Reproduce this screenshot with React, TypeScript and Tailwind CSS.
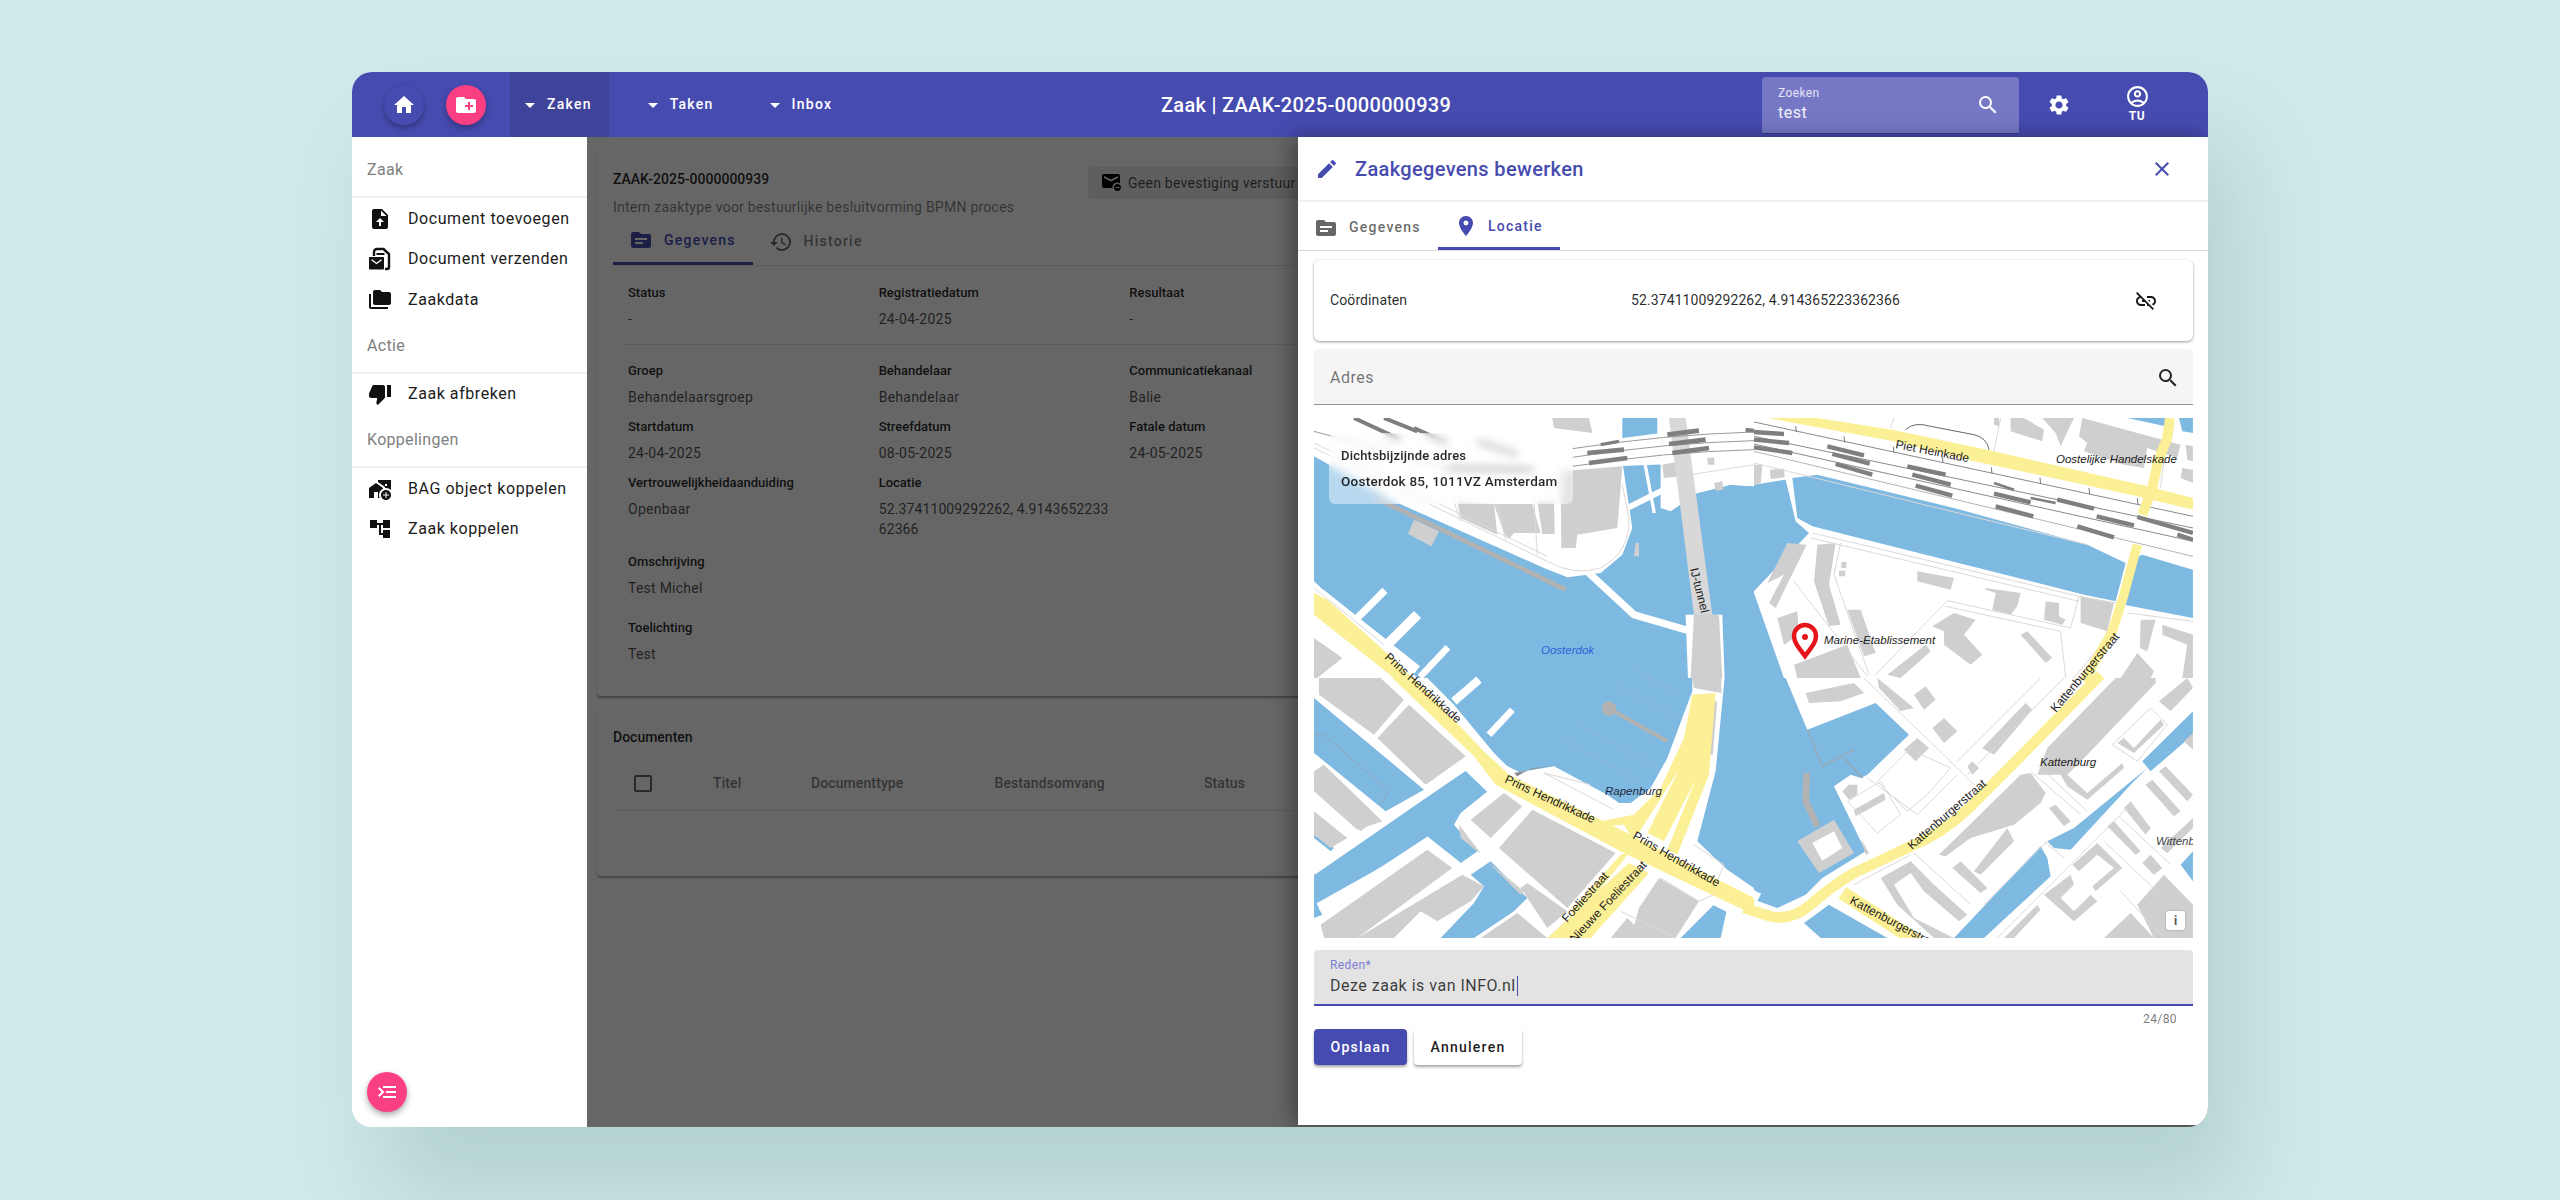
import {
  MdAccountTree,
  MdAddHomeWork,
  MdArrowDropDown,
  MdClose,
  MdCreateNewFolder,
  MdEdit,
  MdFolderCopy,
  MdHistory,
  MdHome,
  MdLinkOff,
  MdLocationOn,
  MdMenuOpen,
  MdOutlineAccountCircle,
  MdSearch,
  MdSettings,
  MdThumbDown,
  MdTopic,
  MdUnsubscribe,
} from "react-icons/md"

// map is traced per quadrant, points are in 3x crop coordinates
const A = "translate(0 0) scale(0.3333)"
const B = "translate(440 0) scale(0.3333)"
const C = "translate(0 260) scale(0.3333)"
const D = "translate(440 260) scale(0.3333)"

const water: [string, string[]][] = [
  [A, ["0,115 240,250 690,450 760,478 860,465 925,410 955,330 925,130 925,0 1030,0 1030,45 1095,100 1150,225 1250,200 1320,205 1320,780 310,780 0,490"]],
  [B, [
    "0,200 95,185 125,310 165,345 0,520",
    "0,525 90,780 0,780",
    "115,180 190,170 600,270 1000,380 1115,435 1085,550 990,530 175,325 130,300",
    "1165,410 1317,455 1317,600 1110,560 1140,420",
    "1120,0 1235,0 1235,25",
    "1275,0 1317,0 1317,45 1285,40",
  ]],
  [C, [
    "340,0 420,80 540,225 600,285 720,265 880,350 915,375 950,375 1010,330 1060,240 1135,40 1135,0",
    "1232,0 1205,280 1150,490 1240,575 1320,630 1320,0",
    "0,60 330,335 215,400 0,225",
    "0,590 225,430 330,350 475,265 545,320 440,405 420,440 500,530 445,565 340,490 0,680",
    "470,590 530,550 640,660 600,700 480,780 380,780 480,675 510,625",
    "0,470 60,510 50,520 0,480",
    "0,660 25,710 0,720",
    "1100,780 1210,670 1240,690 1220,780",
  ]],
  [D, [
    "0,0 95,0 160,155 365,75 465,170 340,290 320,300 290,290 240,325 335,520 205,600 155,650 70,690 0,665",
    "150,735 225,680 400,780 200,780",
    "600,780 860,505 880,540 890,595 690,780",
    "880,490 960,450 1180,270 1140,310 950,515 900,510",
    "1165,250 1317,100 1317,170 1190,280",
    "1280,560 1317,520 1317,610",
  ]],
]

const buildings: [string, string[]][] = [
  [A, [
    "740,160 925,145 910,330 790,350 785,390 742,390",
    "540,258 655,258 680,345 600,345 585,362 570,345",
    "670,250 720,250 722,348 685,348",
    "430,250 540,258 550,350 440,300",
    "300,305 375,340 352,385 282,348",
    "715,0 825,0 835,45 720,30",
    "1045,140 1100,130 1105,175 1050,180",
    "1200,195 1225,190 1228,215 1205,218",
    "0,660 85,720 10,780 0,780",
    "1180,120 1200,118 1202,140 1182,140",
    "965,375 975,375 975,415 960,415",
  ]],
  [B, [
    "770,0 810,0 870,35 865,70 770,40",
    "865,0 960,0 920,85 905,45",
    "985,0 1280,80 1270,120 1180,90 1170,150 1110,140 990,100 1000,75 975,55",
    "1295,80 1317,85 1317,130 1300,125",
    "1285,150 1317,155 1317,195 1280,180",
    "0,140 25,140 20,195 0,200",
    "48,155 90,152 92,178 50,183",
    "190,380 245,375 225,500 260,620 225,625 180,490",
    "100,375 158,380 65,570 45,555 90,470 40,495",
    "490,460 600,480 590,515 490,490",
    "695,510 800,525 790,565 770,590 715,575 725,525 695,515",
    "875,550 915,555 915,595 935,605 925,620 870,605",
    "980,535 1080,555 1060,640 980,615",
    "70,600 130,580 135,650 90,680",
    "280,575 320,575 365,705 330,715",
    "120,740 280,680 320,780 130,780",
    "535,625 600,585 665,605 630,650 685,710 650,740 570,680 570,640",
    "800,650 820,640 895,720 875,735",
    "400,770 515,680 530,700 440,780",
    "1160,605 1205,605 1180,700 1158,690",
    "1225,620 1317,650 1317,780 1285,780 1300,680 1225,650",
    "1100,780 1150,705 1200,760 1190,780",
    "262,432 278,432 276,450 262,450",
    "255,458 275,458 273,475 255,475",
    "720,0 735,0 735,25 720,20",
  ]],
  [C, [
    "15,0 200,0 270,65 180,170 15,50",
    "190,180 285,80 455,235 335,320",
    "0,280 30,260 205,430 130,455 0,340",
    "0,400 100,480 50,510 0,470",
    "470,425 570,345 625,385 530,480",
    "555,510 655,395 905,525 760,690",
    "435,440 500,525 490,520 440,480",
    "20,740 340,515 415,570 130,780 30,780",
    "130,780 445,590 510,625 470,670 370,730 320,700 240,780",
    "520,550 630,640 620,650 530,560",
    "640,615 760,700 700,750 620,630",
    "500,780 610,705 700,780",
    "975,690 1035,600 1155,670 1085,780 950,780",
    "890,780 940,720 1000,780",
    "110,430 135,410 165,440 140,460",
  ]],
  [D, [
    "155,45 300,15 330,45 260,70 165,75",
    "370,0 480,90 440,100 375,30",
    "480,50 515,25 545,65 510,95",
    "535,150 570,120 610,160 570,195",
    "450,215 490,180 525,210 485,250",
    "685,210 815,75 835,95 720,230",
    "640,265 655,250 675,270 655,290",
    "555,530 800,290 830,285 875,345 860,375 780,440 650,480 575,535",
    "595,570 620,550 700,630 680,645",
    "660,580 760,450 780,490 680,590",
    "880,210 1085,0 1205,0 1205,15 1000,230 940,290 1000,345 1105,255 1110,270 1000,365 940,325 920,290 850,290",
    "885,390 905,380 950,430 930,445",
    "1110,390 1130,370 1190,450 1175,470",
    "1060,445 1080,430 1160,520 1145,530",
    "1175,320 1195,305 1280,400 1260,415",
    "1215,280 1235,265 1317,350 1300,370",
    "870,650 950,590 960,620 920,660 960,700 1010,650 1030,670 960,730",
    "955,560 1030,495 1105,570 1025,640 1015,625 1080,570 1030,530 975,580",
    "1165,555 1190,530 1225,570 1200,590",
    "1150,680 1230,590 1317,680 1317,780 1200,780",
    "1050,780 1130,705 1200,780",
    "750,780 850,680 860,695 780,780",
    "1220,510 1317,420 1317,450 1240,525",
    "1090,195 1110,180 1140,210 1220,125 1230,140 1140,225",
    "1215,70 1300,0 1317,30 1250,100",
    "1290,190 1317,165 1317,215",
    "380,600 470,550 540,620 640,710 615,730 510,640 470,585 420,620 480,720 600,780 540,780 430,680",
    "285,320 310,320 310,350 285,365 265,340",
    "300,395 390,345 395,365 305,415",
    "130,490 240,425 300,525 195,585",
    "320,480 345,525 335,530",
  ]],
]

const thin: [string, string[]][] = [
  [A, [
    "M0,90 L700,430 Q780,475 860,450 Q950,400 945,300 L925,200",
    "M0,75 L700,415",
    "M420,250 L440,310",
    "M660,250 L670,410",
    "M550,258 L575,365",
    "M1130,170 L1320,140",
    "M0,510 L210,680",
  ]],
  [B, [
    "M175,345 L975,535 L1115,560",
    "M170,360 L975,550",
    "M260,375 L240,470 L345,770",
    "M120,490 L340,775",
    "M580,548 L950,630 L975,535",
    "M575,565 L920,640 L935,780",
    "M580,548 L365,770",
    "M0,135 L1000,380",
    "M740,0 L720,100",
    "M420,0 L410,30",
    "M1230,120 L1220,210",
    "M1100,570 L1080,640",
    "M960,780 L1050,670",
    "M1120,585 L1317,610",
  ]],
  [C, [
    "M830,320 L690,285 L900,395",
    "M1140,500 L1230,560 L1210,610",
    "M1040,600 L1155,670 L1200,650",
    "M920,700 L1085,780",
  ]],
  [D, [
    "M330,0 L610,270 L660,320",
    "M610,250 L860,0",
    "M640,290 L930,0",
    "M340,300 L490,410 L610,290",
    "M480,220 L590,270 L520,350 L460,400 L370,310 L480,200",
    "M480,525 L650,680",
    "M690,680 L880,490",
    "M870,490 L930,540",
    "M830,280 L980,410",
    "M850,260 L1000,400",
    "M1075,200 L1190,90 L1240,140 L1150,250 L1075,200",
    "M1095,415 L1250,560",
    "M1050,490 L1230,660",
    "M1100,640 L1230,780",
    "M730,780 L1120,390",
    "M300,620 L470,530",
    "M280,370 L380,310 L440,410 L370,465 L280,370",
  ]],
]

// dark sleepers on the railway bundle
const rails: [string, number, number, number, number, number][] = [
  [A, 860, 80, 915, 70, 10],
  [A, 1060, 50, 1155, 38, 14],
  [A, 820, 105, 930, 95, 14],
  [A, 1065, 78, 1175, 65, 14],
  [A, 825, 135, 940, 120, 14],
  [A, 1075, 105, 1185, 90, 14],
  [A, 1295, 35, 1320, 38, 12],
  [A, 120, 0, 260, 65, 12],
  [A, 210, 0, 310, 40, 12],
  [A, 300, 30, 400, 75, 12],
  [A, 490, 70, 610, 110, 12],
  [A, 400, 150, 660, 155, 14],
  [B, 0, 42, 90, 48, 13],
  [B, 0, 65, 105, 75, 13],
  [B, 0, 88, 115, 105, 13],
  [B, 220, 85, 330, 112, 13],
  [B, 235, 108, 347, 137, 13],
  [B, 245, 138, 355, 170, 13],
  [B, 460, 145, 575, 170, 13],
  [B, 475, 170, 590, 200, 13],
  [B, 485, 203, 595, 233, 13],
  [B, 720, 195, 780, 215, 8],
  [B, 720, 227, 830, 253, 13],
  [B, 725, 265, 838, 295, 13],
  [B, 830, 240, 905, 255, 8],
  [B, 910, 245, 1020, 272, 13],
  [B, 1028, 295, 1140, 322, 13],
  [B, 970, 325, 1080, 358, 13],
  [B, 1150, 297, 1317, 345, 13],
  [B, 1270, 350, 1317, 365, 13],
]

const labels: { t: string; x: number; y: number; r?: number; s?: number; i?: boolean; c?: string }[] = [
  { t: "Piet Heinkade", x: 581, y: 30, r: 11 },
  { t: "Oostelijke Handelskade", x: 742, y: 45, r: 0, i: true, s: 11.5 },
  { t: "Marine-Etablissement", x: 510, y: 226, i: true, s: 11.5 },
  { t: "Oosterdok", x: 227, y: 236, i: true, c: "#2f62d6", s: 11.5 },
  { t: "IJ-tunnel", x: 376, y: 151, r: 76 },
  { t: "Prins Hendrikkade", x: 70, y: 240, r: 42 },
  { t: "Prins Hendrikkade", x: 190, y: 364, r: 25 },
  { t: "Prins Hendrikkade", x: 318, y: 420, r: 30 },
  { t: "Rapenburg", x: 291, y: 377, i: true, s: 11.5, c: "#1f2a3a" },
  { t: "Foeliestraat", x: 253, y: 505, r: -48 },
  { t: "Nieuwe Foeliestraat", x: 261, y: 525, r: -47 },
  { t: "Kattenburgerstraat", x: 598, y: 432, r: -41 },
  { t: "Kattenburgerstraat", x: 742, y: 295, r: -50 },
  { t: "Kattenburgerstraat", x: 535, y: 485, r: 28 },
  { t: "Kattenburg", x: 726, y: 348, i: true, s: 11.5 },
  { t: "Wittenburg", x: 842, y: 427, i: true, s: 11.5, c: "#444" },
]

function MapDrawing() {
  return (
    <svg viewBox="0 0 879 520" className="block h-[520px] w-[879px] bg-white">
      {water.map(([q, list], i) => (
        <g key={i} transform={q} fill="#7eb9e2">
          {list.map((p, j) => (
            <polygon key={j} points={p} />
          ))}
        </g>
      ))}

      {/* piers, bridges, quay strips */}
      <g transform={A} fill="none" stroke="#fff" strokeLinecap="square">
        <polyline points="830,470 960,590 1130,640" strokeWidth={22} />
        <polyline points="950,265 1090,195" strokeWidth={18} />
        <polyline points="990,120 1020,280" strokeWidth={10} />
        <polyline points="135,595 205,525" strokeWidth={22} />
        <polyline points="220,680 300,600" strokeWidth={30} />
        <polyline points="325,770 395,695" strokeWidth={20} />
        <polyline points="0,550 290,780" strokeWidth={90} strokeLinecap="butt" />
      </g>
      <g transform={A}>
        <polygon points="0,0 700,0 925,130 925,330 860,450 700,430 0,85" fill="#fff" />
        <polygon points="775,80 1040,45 1320,30 1320,100 1150,135 775,150" fill="#fff" />
        <polygon points="1040,130 1150,100 1320,130 1320,205 1250,200 1150,225 1070,280 1040,270" fill="#fff" />
        <polygon points="1115,590 1225,590 1232,780 1122,780" fill="#fff" />
      </g>
      <g transform={C} fill="none" stroke="#fff">
        <polyline points="420,70 495,5" strokeWidth={25} />
        <polyline points="525,170 595,95" strokeWidth={20} />
        <polyline points="235,0 545,300 1320,690" strokeWidth={95} />
        <polyline points="0,580 340,345 480,250" strokeWidth={20} />
        <polyline points="20,700 340,490 440,570 540,500 640,385" strokeWidth={24} />
      </g>

      {/* docks and lines on the water */}
      <g transform={A} stroke="#b2b2b2" fill="none">
        <line x1={185} y1={240} x2={755} y2={515} strokeWidth={14} />
        <line x1={950} y1={745} x2={1010} y2={780} strokeWidth={3} stroke="#93b8d4" />
      </g>
      <g transform={C} fill="none">
        <line x1={900} y1={100} x2={1060} y2={190} stroke="#b2b2b2" strokeWidth={12} />
        <circle cx={885} cy={92} r={22} fill="#b2b2b2" />
        <line x1={1000} y1={0} x2={1100} y2={45} stroke="#93b8d4" strokeWidth={3} />
        <line x1={910} y1={25} x2={1085} y2={115} stroke="#93b8d4" strokeWidth={3} />
        <line x1={785} y1={135} x2={1025} y2={265} stroke="#93b8d4" strokeWidth={3} />
        <line x1={755} y1={190} x2={985} y2={315} stroke="#93b8d4" strokeWidth={3} />
        <polygon points="600,285 720,262 650,272 610,295" fill="#8e8e8e" />
        <line x1={1205} y1={70} x2={1192} y2={230} stroke="#cfcfcf" strokeWidth={9} />
        <polyline points="5,170 30,170 225,340 200,375" stroke="#93a5b4" strokeWidth={3} />
      </g>
      <g transform={D} fill="none">
        <polyline points="160,155 205,265 300,215" stroke="#9aa6b0" strokeWidth={4} />
        <polyline points="270,240 325,300" stroke="#9aa6b0" strokeWidth={4} />
        <polyline points="158,285 155,370 190,445" stroke="#b2b2b2" strokeWidth={20} />
      </g>

      {buildings.map(([q, list], i) => (
        <g key={i} transform={q} fill="#cfcfcf">
          {list.map((p, j) => (
            <polygon key={j} points={p} />
          ))}
        </g>
      ))}
      <g transform={D}>
        <polygon points="175,495 240,460 265,510 205,548" fill="#fff" />
      </g>

      {/* IJ-tunnel */}
      <g transform={A} fill="#d8d8d8">
        <polygon points="1065,0 1115,0 1195,590 1140,590" />
        <polygon points="1140,590 1215,590 1225,780 1130,780" fill="#cfcfcf" />
      </g>
      <g transform={C}>
        <polygon points="1135,0 1222,0 1222,45 1140,30" fill="#cfcfcf" />
      </g>

      {thin.map(([q, list], i) => (
        <g key={i} transform={q} fill="none" stroke="#dcd8d8" strokeWidth={3}>
          {list.map((d, j) => (
            <path key={j} d={d} />
          ))}
        </g>
      ))}

      {/* railway */}
      <g transform={A} fill="none" stroke="#9a9a9a" strokeWidth={3}>
        <path d="M775,92 Q1050,50 1320,42" />
        <path d="M775,118 Q1050,75 1320,68" />
        <path d="M775,145 Q1050,102 1320,95" />
        <path d="M0,40 L400,150" />
      </g>
      <g transform={B} fill="none" stroke="#8a8a8a" strokeWidth={3}>
        <polygon points="0,35 1317,305 1317,425 0,120" fill="#fff" stroke="none" />
        <path d="M0,12 L1317,295" />
        <path d="M0,55 L1317,330" />
        <path d="M0,78 L1317,370" />
        <path d="M0,100 L1317,415" stroke="#b5b5b5" />
        <path d="M455,35 Q480,10 530,25 L660,50 Q700,60 705,95" stroke="#666" />
        {[125, 270, 418, 565, 712, 858, 1005, 1150].map((x, i) => (
          <line key={x} x1={x} y1={24 + i * 31} x2={x + 2} y2={42 + i * 31} stroke="#777" />
        ))}
      </g>
      {rails.map(([q, x1, y1, x2, y2, w], i) => (
        <g key={i} transform={q}>
          <line x1={x1} y1={y1} x2={x2} y2={y2} stroke="#7f7f7f" strokeWidth={w} />
        </g>
      ))}

      {/* main roads */}
      <g transform={A} fill="#fbf095">
        <polygon points="0,525 40,545 235,720 295,780 240,780 0,590" />
      </g>
      <g transform={C} fill="#fbf095">
        <polygon points="235,0 300,0 510,220 585,290 950,470 1320,660 1320,710 930,525 545,320 480,235" />
        <polygon points="1135,50 1205,45 1185,290 1090,530 1060,515 1145,305 1050,490 1000,465 1095,275 990,440 975,465 950,475 930,440 870,445 860,430 960,410 1040,330 1110,180" />
        <polygon points="945,555 1005,585 830,780 700,780" />
        <polygon points="920,530 945,525 790,720 770,700" />
      </g>
      <g transform={B} fill="#fbf095">
        <polygon points="40,0 190,0 415,35 720,100 1180,205 1317,240 1317,275 1150,235 640,125 420,70" />
      </g>
      <g transform={B} fill="none" stroke="#fbf095" strokeLinejoin="round">
        <polyline points="1248,0 1240,60 1212,130 1195,210 1165,290" strokeWidth={30} />
        <polyline points="1150,380 1110,530 1075,640 990,790" strokeWidth={28} />
      </g>
      <g transform={D} fill="none" stroke="#fbf095" strokeLinejoin="round">
        <path d="M-30,690 L50,715 Q110,730 170,680 Q240,620 300,585 L470,505 Q560,470 640,395 L800,235 L1040,-10" strokeWidth={32} />
        <path d="M265,645 L490,790" strokeWidth={42} />
      </g>

      {labels.map((l, i) => (
        <text
          key={i}
          x={l.x}
          y={l.y}
          transform={l.r ? `rotate(${l.r} ${l.x} ${l.y})` : undefined}
          fontSize={l.s ?? 12}
          fontStyle={l.i ? "italic" : "normal"}
          fill={l.c ?? "#222"}
          fontFamily="'Liberation Sans', sans-serif"
        >
          {l.t}
        </text>
      ))}

      {/* pin */}
      <path
        d="M491,238 C484,229 480,224 480,218 A11,11 0 1 1 502,218 C502,224 498,229 491,238 Z"
        fill="#fff"
        stroke="#e8141c"
        strokeWidth={4.5}
      />
      <circle cx={491} cy={219} r={3} fill="#e8141c" />
    </svg>
  )
}

// solid file with an upward arrow
function UploadDocIcon() {
  return (
    <svg viewBox="0 0 24 24" className="h-[24px] w-[24px]">
      <path fillRule="evenodd" fill="currentColor" d="M14 2H6c-1.1 0-2 .9-2 2v16c0 1.1.9 2 2 2h12c1.1 0 2-.9 2-2V8l-6-6zm-1 7V3.5L18.5 9H13z" />
      <polygon fill="#fff" points="8,15 12,11 16,15 13,15 13,19 11,19 11,15" />
    </svg>
  )
}

// outlined file behind an envelope
function SendDocIcon() {
  return (
    <svg viewBox="0 0 24 24" className="h-[24px] w-[24px]">
      <path d="M6 9V5a3 3 0 0 1 3-3h6.500l5.500 5v13a2 2 0 0 1-2 2h-2" fill="none" stroke="currentColor" strokeWidth={2.4} />
      <path d="M8.500 7h8" fill="none" stroke="currentColor" strokeWidth={2} />
      <rect x={1} y={10} width={15} height={12.500} rx={0.8} fill="currentColor" />
      <polyline points="3.500,12.800 8.500,16.500 13.500,12.800" fill="none" stroke="#fff" strokeWidth={1.4} />
    </svg>
  )
}

function SideLabel({ children, first }: { children: string; first?: boolean }) {
  return (
    <div className={`flex items-center border-b-2 border-[#f0f0f0] pl-[15px] text-[16px] tracking-[0.3px] text-[#808080] ${first ? "h-[61px] pt-[7px]" : "h-[54px]"}`}>
      {children}
    </div>
  )
}

function SideItem({ icon, label }: { icon: React.ReactNode; label: string }) {
  return (
    <div className="flex h-[40.5px] items-center pl-[15px] pt-[1px] text-[16px] tracking-[0.56px] text-[#1b1b1b]">
      <span className="flex w-[25px] justify-center text-[24px] text-[#111]">{icon}</span>
      <span className="ml-[16px] whitespace-nowrap">{label}</span>
    </div>
  )
}

function NavButton({ label, active }: { label: string; active?: boolean }) {
  return (
    <div className={`flex h-full items-center pl-[8.5px] pr-[17.5px] text-[14px] font-medium tracking-[1.25px] text-white ${active ? "bg-[#3f4399]" : ""}`}>
      <MdArrowDropDown className="mr-[5px] text-[24px]" />
      {label}
    </div>
  )
}

function Field({ label, value, wide }: { label: string; value: string; wide?: boolean }) {
  return (
    <div className="pb-[11px]">
      <div className="h-[18px] text-[13px] font-medium leading-[18px] text-black/85">{label}</div>
      <div className={`mt-[7px] text-[14px] leading-[20px] text-black/70 ${wide ? "w-[232px] break-all tracking-[0.12px]" : "tracking-[0.25px]"}`}>{value}</div>
    </div>
  )
}

function Field2({ label, value }: { label: string; value: string }) {
  return (
    <div className="pb-[21px] pl-[15px]">
      <div className="h-[18px] text-[13px] font-medium leading-[18px] text-black/85">{label}</div>
      <div className="mt-[7px] text-[14px] leading-[20px] tracking-[0.25px] text-black/70">{value}</div>
    </div>
  )
}

export default function App() {
  return (
    <div className="h-[1200px] overflow-hidden bg-[#cfe9e8] pl-[352px] pt-[72px] font-[Roboto,sans-serif]">
      <div className="relative flex h-[1055px] w-[1856px] flex-col overflow-hidden rounded-[20px] bg-white shadow-[30px_70px_90px_rgba(40,90,90,0.16)]">
        {/* top bar */}
        <header className="flex h-[65px] shrink-0 items-center bg-[#464bb0] text-white">
          <div className="flex h-full w-[809px] items-center pl-[31.5px]">
            <button className="flex h-[40px] w-[40px] items-center justify-center rounded-full bg-[#464bb0] text-[24px] shadow-[0_3px_6px_rgba(0,0,0,0.3)]">
              <MdHome />
            </button>
            <button className="ml-[22.5px] flex h-[40px] w-[40px] items-center justify-center rounded-full bg-[#fb3f83] text-[24px] shadow-[0_3px_6px_rgba(0,0,0,0.3)]">
              <MdCreateNewFolder />
            </button>
            <div className="ml-[23.5px] flex h-full gap-[23px]">
              <NavButton label="Zaken" active />
              <NavButton label="Taken" />
              <NavButton label="Inbox" />
            </div>
          </div>
          <div className="whitespace-nowrap text-[20px] font-medium tracking-[0.3px]">Zaak | ZAAK-2025-0000000939</div>
          <div className="ml-auto flex h-[56px] w-[257px] items-center justify-between rounded-t-[4px] bg-[#7678c6] pl-[16px] pr-[19px] shadow-[0_1px_1px_rgba(0,0,0,0.2)]">
            <div className="-mt-[1px]">
              <div className="text-[12px] leading-[16px] tracking-[0.4px] text-white/80">Zoeken</div>
              <div className="mt-[2px] text-[16px] leading-[20px] tracking-[0.5px] text-white/90">test</div>
            </div>
            <MdSearch className="text-[24px]" />
          </div>
          <MdSettings className="ml-[28px] text-[24px]" />
          <div className="-mt-[3px] ml-[46px] mr-[51px] flex w-[40px] flex-col items-center">
            <MdOutlineAccountCircle className="text-[25px]" />
            <div className="text-[12px] font-bold leading-[14px] tracking-[0.5px]">TU</div>
          </div>
        </header>

        <div className="relative flex min-h-0 flex-1">
          {/* left menu */}
          <aside className="w-[235px] shrink-0 bg-white">
            <SideLabel first>Zaak</SideLabel>
            <SideItem icon={<UploadDocIcon />} label="Document toevoegen" />
            <SideItem icon={<SendDocIcon />} label="Document verzenden" />
            <SideItem icon={<MdFolderCopy />} label="Zaakdata" />
            <SideLabel>Actie</SideLabel>
            <SideItem icon={<MdThumbDown />} label="Zaak afbreken" />
            <SideLabel>Koppelingen</SideLabel>
            <SideItem icon={<MdAddHomeWork />} label="BAG object koppelen" />
            <SideItem icon={<MdAccountTree />} label="Zaak koppelen" />
          </aside>

          {/* case page, dimmed by the drawer backdrop */}
          <main className="relative min-w-0 flex-1 overflow-hidden bg-white">
            <div className="ml-[10px] mt-[10px] w-[1400px] rounded-[4px] bg-white pb-[11px] pl-[16px] shadow-[0_2px_2px_rgba(0,0,0,0.35)]">
              <div className="flex pt-[22px]">
                <div className="w-[475px]">
                  <div className="text-[14px] font-medium leading-[20px] text-black/85">ZAAK-2025-0000000939</div>
                  <div className="mt-[8px] whitespace-nowrap text-[14px] leading-[20px] tracking-[0.25px] text-black/50">
                    Intern zaaktype voor bestuurlijke besluitvorming BPMN proces
                  </div>
                </div>
                <div className="-mt-[2px] flex h-[32px] w-[280px] items-center rounded-[4px] bg-[#ececec] pl-[11px] text-[14px] tracking-[0.25px] text-black/70">
                  <MdUnsubscribe className="mr-[5px] text-[24px] text-black" />
                  Geen bevestiging verstuur
                </div>
              </div>
              <div className="mt-[1px] flex h-[48px] items-stretch border-b border-black/10 text-[14px] font-medium tracking-[1.25px]">
                <div className="flex w-[139.5px] items-center border-b-[3px] border-[#464bb0] pl-[16px] text-[#464bb0]">
                  <MdTopic className="text-[24px]" />
                  <span className="ml-[11px]">Gegevens</span>
                </div>
                <div className="flex items-center pl-[16px] text-black/50">
                  <MdHistory className="text-[24px] text-black/60" />
                  <span className="ml-[11px]">Historie</span>
                </div>
              </div>
              <div className="grid w-[767px] grid-cols-3 pl-[15px] pt-[18px]">
                <div>
                  <div className="h-[18px] text-[13px] font-medium leading-[18px] text-black/85">Status</div>
                  <div className="mt-[7px] text-[14px] leading-[20px] text-black/70">-</div>
                </div>
                <div>
                  <div className="h-[18px] text-[13px] font-medium leading-[18px] text-black/85">Registratiedatum</div>
                  <div className="mt-[7px] text-[14px] leading-[20px] tracking-[0.25px] text-black/70">24-04-2025</div>
                </div>
                <div>
                  <div className="h-[18px] text-[13px] font-medium leading-[18px] text-black/85">Resultaat</div>
                  <div className="mt-[7px] text-[14px] leading-[20px] text-black/70">-</div>
                </div>
              </div>
              <div className="ml-[10px] mt-[15px] h-px bg-black/10" />
              <div className="grid w-[767px] grid-cols-3 pb-[3px] pl-[15px] pt-[17px]">
                <Field label="Groep" value="Behandelaarsgroep" />
                <Field label="Behandelaar" value="Behandelaar" />
                <Field label="Communicatiekanaal" value="Balie" />
                <Field label="Startdatum" value="24-04-2025" />
                <Field label="Streefdatum" value="08-05-2025" />
                <Field label="Fatale datum" value="24-05-2025" />
                <Field label="Vertrouwelijkheidaanduiding" value="Openbaar" />
                <Field label="Locatie" value="52.37411009292262, 4.914365223362366" wide />
                <div />
              </div>
              <Field2 label="Omschrijving" value="Test Michel" />
              <Field2 label="Toelichting" value="Test" />
            </div>

            <div className="ml-[10px] mt-[10px] h-[170px] w-[1400px] rounded-[4px] bg-white pl-[16px] shadow-[0_2px_2px_rgba(0,0,0,0.35)]">
              <div className="pt-[21px] text-[14px] font-medium leading-[20px] text-black/85">Documenten</div>
              <div className="mt-[10px] flex h-[54px] w-[1200px] items-center border-b border-black/10 text-[14px] font-medium tracking-[0.1px] text-black/50">
                <div className="ml-[21px] h-[17px] w-[18px] rounded-[2px] border-2 border-black/60" />
                <div className="ml-[61px] w-[98px]">Titel</div>
                <div className="w-[183.5px]">Documenttype</div>
                <div className="w-[209.5px]">Bestandsomvang</div>
                <div>Status</div>
              </div>
            </div>

            <div className="absolute inset-0 bg-black/60" />
          </main>

          {/* edit drawer */}
          <section className="absolute bottom-[2px] right-0 top-0 flex w-[910px] flex-col bg-white shadow-[-6px_0_20px_rgba(0,0,0,0.35)]">
            <div className="flex h-[65px] shrink-0 items-center border-b-2 border-[#f0f0f0] pl-[16.5px] pr-[34px] text-[#464bb0]">
              <MdEdit className="shrink-0 text-[24px]" />
              <span className="ml-[16.5px] whitespace-nowrap text-[20px] font-medium tracking-[0.35px]">Zaakgegevens bewerken</span>
              <MdClose className="ml-auto text-[24px]" />
            </div>
            <div className="flex h-[49px] shrink-0 items-stretch border-b border-black/15 text-[14px] font-medium tracking-[1.25px]">
              <div className="flex w-[140px] items-center pl-[16px] pt-[3px] text-black/60">
                <MdTopic className="text-[24px]" />
                <span className="ml-[11px]">Gegevens</span>
              </div>
              <div className="flex w-[122px] items-center border-b-[3px] border-[#464bb0] pl-[16px] pt-[3px] text-[#464bb0]">
                <MdLocationOn className="text-[24px]" />
                <span className="ml-[10px]">Locatie</span>
              </div>
            </div>
            <div className="pl-[16px] pr-[15px] pt-[9px]">
              <div className="flex h-[81px] items-center rounded-[6px] bg-white pl-[16px] text-[14px] tracking-[0.1px] text-black/85 shadow-[0_1px_3px_rgba(0,0,0,0.4)]">
                <div className="w-[301px]">Coördinaten</div>
                <div>52.37411009292262, 4.914365223362366</div>
                <MdLinkOff className="ml-auto mr-[35px] text-[24px] text-black/90" />
              </div>
              <div className="mt-[8px] flex h-[56px] items-center rounded-t-[4px] border-b border-black/40 bg-[#f5f5f5] pl-[16px] pr-[13px] pt-[2px] text-[16px] tracking-[0.5px] text-black/55">
                Adres
                <MdSearch className="ml-auto text-[24px] text-black/85" />
              </div>
              <div className="relative mt-[13px] h-[520px]">
                <MapDrawing />
                <div className="absolute left-[15px] top-[15px] h-[71px] w-[244px] rounded-[6px] bg-white/45 pl-[12px] pt-[13px] backdrop-blur-[4px]">
                  <div className="text-[13px] font-medium leading-[20px] tracking-[0.2px] text-black/85">Dichtsbijzijnde adres</div>
                  <div className="mt-[5px] whitespace-nowrap text-[13.5px] font-medium leading-[20px] tracking-[0.25px] text-black/85">Oosterdok 85, 1011VZ Amsterdam</div>
                </div>
                <div className="absolute bottom-[8px] right-[8px] flex h-[19px] w-[19px] items-center justify-center rounded-[3px] bg-white text-[12px] font-bold text-[#555] shadow-[0_0_2px_rgba(0,0,0,0.3)]">
                  i
                </div>
              </div>
              <div className="mt-[12px] h-[56px] rounded-t-[4px] border-b-2 border-[#464bb0] bg-[#e3e3e3] pl-[16px] pt-[7px]">
                <div className="text-[12px] leading-[16px] tracking-[0.4px] text-[#7b7fd0]">Reden*</div>
                <div className="mt-[1px] flex h-[24px] items-center text-[16px] tracking-[0.5px] text-black/75">
                  Deze zaak is van INFO.nl
                  <span className="ml-px h-[20px] w-px bg-[#464bb0]" />
                </div>
              </div>
              <div className="flex h-[23px] items-center justify-end pr-[16px] pt-[3px] text-[12px] tracking-[0.4px] text-black/55">24/80</div>
              <div className="flex gap-[7px]">
                <button className="h-[36px] w-[93px] rounded-[4px] bg-[#464bb0] text-[14px] font-medium tracking-[1.25px] text-white shadow-[0_2px_3px_rgba(0,0,0,0.35)]">Opslaan</button>
                <button className="h-[36px] w-[108px] rounded-[4px] bg-white text-[14px] font-medium tracking-[1.25px] text-black/90 shadow-[0_2px_3px_rgba(0,0,0,0.35)]">Annuleren</button>
              </div>
            </div>
          </section>

          {/* menu toggle */}
          <button className="absolute bottom-[15px] left-[15px] flex h-[40px] w-[40px] items-center justify-center rounded-full bg-[#fb3f83] text-[24px] text-white shadow-[0_3px_6px_rgba(0,0,0,0.35)]">
            <MdMenuOpen className="-scale-x-100" />
          </button>
        </div>
      </div>
    </div>
  )
}
